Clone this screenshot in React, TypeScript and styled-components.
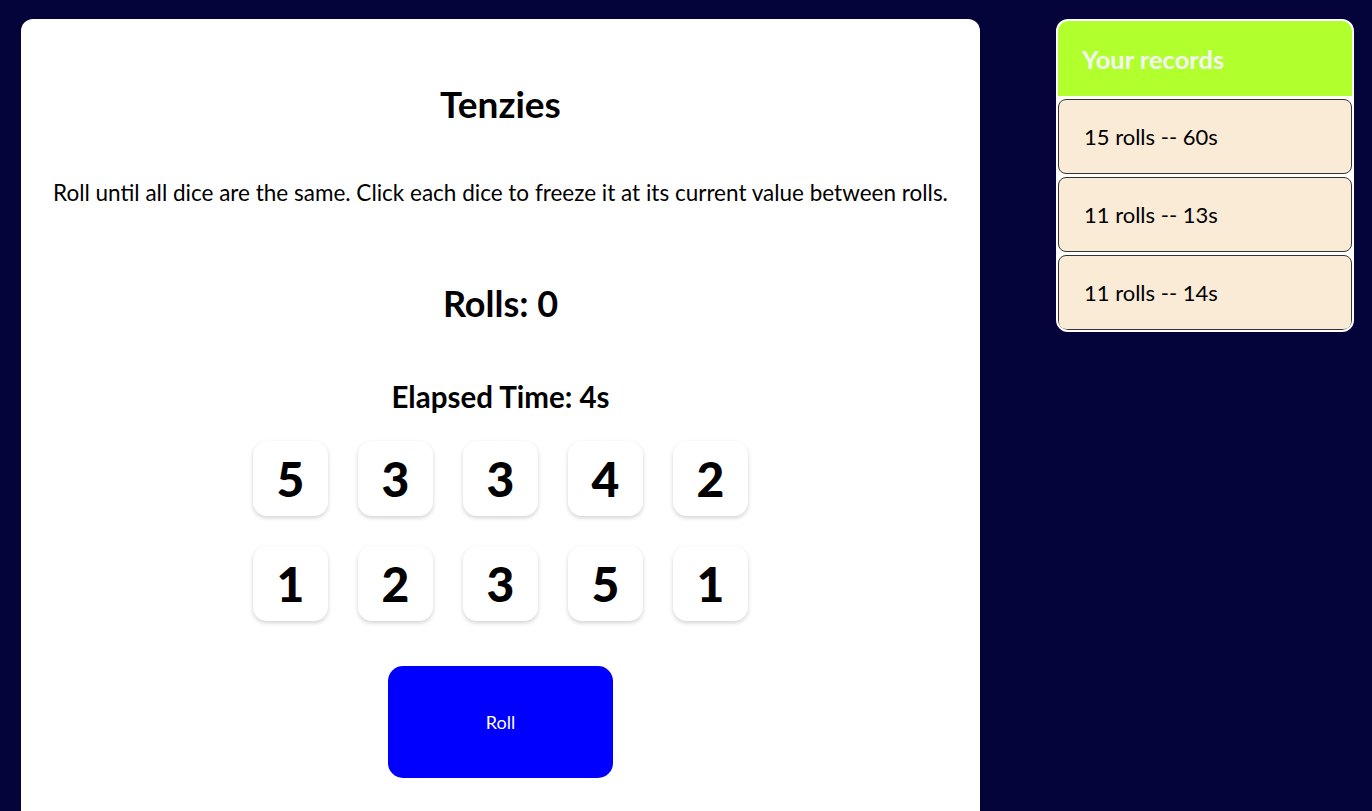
import styled, { createGlobalStyle } from 'styled-components'

const GlobalStyle = createGlobalStyle`
  html, body {
    margin: 0;
    background: #04043a;
    font-family: "Gill Sans", Lato, "Liberation Sans", sans-serif;
  }
`

const Page = styled.div`
  display: flex;
  justify-content: space-between;
  align-items: flex-start;
  padding: 19px 18px 0 21px;
  height: 811px;
  box-sizing: border-box;
  overflow: hidden;
`

const Board = styled.main`
  width: 959px;
  min-height: 820px;
  background: #fff;
  border-radius: 12px;
  display: flex;
  flex-direction: column;
  align-items: center;
  text-align: center;
  color: #000;
`

const Title = styled.h1`
  margin: 67px 0 0;
  font-size: 37px;
  font-weight: 700;
  line-height: 36px;
`

const Instructions = styled.p`
  margin: 57px 0 0;
  font-size: 22.5px;
  line-height: 27px;
`

const Rolls = styled.h2`
  margin: 77px 0 0;
  font-size: 36px;
  font-weight: 700;
  line-height: 40px;
`

const Elapsed = styled.h3`
  margin: 59px 0 0;
  font-size: 29.5px;
  font-weight: 700;
  line-height: 30px;
`

const DiceGrid = styled.div`
  margin-top: 29px;
  display: grid;
  grid-template-columns: repeat(5, 75px);
  gap: 30px;
`

const Die = styled.div<{ $held?: boolean }>`
  width: 75px;
  height: 75px;
  border-radius: 14px;
  background: ${(p) => (p.$held ? '#59e391' : '#fff')};
  box-shadow: 0 2px 4px rgba(0, 0, 0, 0.18);
  display: flex;
  align-items: center;
  justify-content: center;
  font-size: 48px;
  font-weight: 900;
  cursor: pointer;
`

const RollButton = styled.button`
  margin-top: 45px;
  width: 225px;
  height: 112px;
  border: none;
  border-radius: 15px;
  background: #0000ff;
  color: #fff;
  font-family: inherit;
  font-size: 18px;
  cursor: pointer;
`

const Records = styled.aside`
  width: 298px;
  box-sizing: border-box;
  border: 2px solid #fff;
  border-radius: 12px;
  background: #fff;
  overflow: hidden;
  display: flex;
  flex-direction: column;
  gap: 3px;
`

const RecordsHeader = styled.div`
  height: 75px;
  background: #b2ff2e;
  color: #f4f4f4;
  font-size: 25.5px;
  font-weight: 700;
  display: flex;
  align-items: center;
  padding-left: 24px;
`

const Record = styled.div`
  height: 75px;
  box-sizing: border-box;
  background: #faebd7;
  border: 1px solid #333;
  border-radius: 8px;
  font-size: 22px;
  display: flex;
  align-items: center;
  padding-left: 25px;
  color: #000;
`

const dice = [5, 3, 3, 4, 2, 1, 2, 3, 5, 1]
const records = ['15 rolls -- 60s', '11 rolls -- 13s', '11 rolls -- 14s']

export default function App() {
  return (
    <>
      <GlobalStyle />
      <Page>
        <Board>
          <Title>Tenzies</Title>
          <Instructions>
            Roll until all dice are the same. Click each dice to freeze it at its current value between rolls.
          </Instructions>
          <Rolls>Rolls: 0</Rolls>
          <Elapsed>Elapsed Time: 4s</Elapsed>
          <DiceGrid>
            {dice.map((d, i) => (
              <Die key={i}>{d}</Die>
            ))}
          </DiceGrid>
          <RollButton>Roll</RollButton>
        </Board>
        <Records>
          <RecordsHeader>Your records</RecordsHeader>
          {records.map((r) => (
            <Record key={r}>{r}</Record>
          ))}
        </Records>
      </Page>
    </>
  )
}
